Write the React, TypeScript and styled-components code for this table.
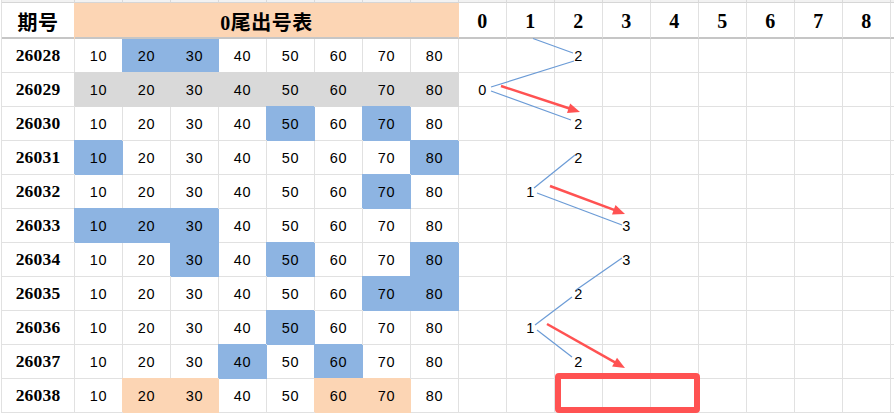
import { Fragment } from 'react';
import styled, { createGlobalStyle, css } from 'styled-components';

const BLUE = '#8db4e2';
const PEACH = '#fcd5b4';
const GREY = '#d9d9d9';
const GRID = '#e1e1e1';
const LINE = '#6b9bd6';
const RED = '#ff5252';

const GlobalStyle = createGlobalStyle`
  body {
    margin: 0;
    background: #fff;
    overflow: hidden;
  }
`;

const Page = styled.div`
  position: relative;
  width: 894px;
  height: 415px;
  overflow: hidden;
`;

const Sheet = styled.div`
  display: grid;
  grid-template-columns: 73px repeat(18, 48px);
  grid-template-rows: 3px 36px repeat(11, 34px);
  margin-left: 1px;
  border-left: 1px solid ${GRID};
`;

const StripCell = styled.div`
  box-sizing: border-box;
  background: #f2f2f2;
  border-right: 1px solid #dadada;
  border-bottom: 1px solid #d6d6d6;
`;

const Cell = styled.div<{ $fill?: string; $top?: boolean }>`
  box-sizing: border-box;
  display: flex;
  align-items: center;
  justify-content: center;
  border-right: 1px solid ${GRID};
  border-bottom: 1px solid ${GRID};
  color: #000;
  font-family: 'Liberation Sans', 'Noto Sans CJK SC', sans-serif;
  font-size: 14.5px;
  letter-spacing: 0.6px;
  ${({ $fill, $top }) =>
    $fill &&
    css`
      background: ${$fill};
      border-color: ${$fill};
      box-shadow: ${$top ? '-1px 0 0' : '-1px -1px 0'} ${$fill};
    `}
`;

const IdCell = styled(Cell)`
  font-family: 'Liberation Serif', serif;
  font-weight: 700;
  font-size: 17.5px;
  letter-spacing: 0.2px;
`;

const HeadCell = styled(Cell)<{ $span?: number }>`
  grid-column: span ${({ $span }) => $span ?? 1};
  border-bottom: 2px solid #c6c6c6;
  padding-top: 3px;
  font-family: 'Liberation Serif', 'Noto Sans CJK SC', serif;
  font-weight: 700;
  font-size: 20px;
  letter-spacing: 0.5px;
  ${({ $fill }) =>
    $fill &&
    css`
      border-bottom: 2px solid #c6c6c6;
    `}
`;

const Overlay = styled.svg`
  position: absolute;
  left: 0;
  top: 0;
  width: 894px;
  height: 415px;
  pointer-events: none;
`;

const Highlight = styled.div`
  position: absolute;
  left: 555px;
  top: 373px;
  width: 145px;
  height: 40px;
  box-sizing: border-box;
  border: 6px solid ${RED};
  border-radius: 4px;
`;

type Row = { id: string; blue?: number[]; peach?: number[]; grey?: boolean; pick: number | null };

const rows: Row[] = [
  { id: '26028', blue: [1, 2], pick: 2 },
  { id: '26029', grey: true, pick: 0 },
  { id: '26030', blue: [4, 6], pick: 2 },
  { id: '26031', blue: [0, 7], pick: 2 },
  { id: '26032', blue: [6], pick: 1 },
  { id: '26033', blue: [0, 1, 2], pick: 3 },
  { id: '26034', blue: [2, 4, 7], pick: 3 },
  { id: '26035', blue: [6, 7], pick: 2 },
  { id: '26036', blue: [4], pick: 1 },
  { id: '26037', blue: [3, 5], pick: 2 },
  { id: '26038', peach: [1, 2, 5, 6], pick: null },
];

const values = [10, 20, 30, 40, 50, 60, 70, 80];
const tails = [0, 1, 2, 3, 4, 5, 6, 7, 8];

const blueLines = [
  [533, 38.5, 573, 53],
  [574, 61, 491, 87],
  [491, 91, 571, 120],
  [575, 155, 534, 188],
  [537, 193, 622, 225],
  [622, 258, 576, 290],
  [572, 297, 535, 325],
  [537, 330, 572, 357],
];

const redArrows = [
  [501, 86, 580, 112],
  [550, 186, 625, 214],
  [547, 324, 625, 368],
];

const arrow = (x1: number, y1: number, x2: number, y2: number) => {
  const len = Math.hypot(x2 - x1, y2 - y1);
  const ux = (x2 - x1) / len;
  const uy = (y2 - y1) / len;
  const bx = x2 - ux * 12;
  const by = y2 - uy * 12;
  const px = -uy * 5;
  const py = ux * 5;
  return {
    line: [x1, y1, bx + ux, by + uy],
    head: `${x2},${y2} ${bx + px},${by + py} ${bx - px},${by - py}`,
  };
};

const fillFor = (row: Row, i: number) => {
  if (row.grey) return GREY;
  if (row.blue?.includes(i)) return BLUE;
  if (row.peach?.includes(i)) return PEACH;
  return undefined;
};

const App = () => (
  <Page>
    <GlobalStyle />
    <Sheet>
      {Array.from({ length: 19 }, (_, i) => (
        <StripCell key={`s${i}`} />
      ))}
      <HeadCell>期号</HeadCell>
      <HeadCell $span={8} $fill={PEACH} $top>
        0尾出号表
      </HeadCell>
      {tails.map((t) => (
        <HeadCell key={`h${t}`}>{t}</HeadCell>
      ))}
      <HeadCell />
      {rows.map((row, r) => (
        <Fragment key={row.id}>
          <IdCell>{row.id}</IdCell>
          {values.map((v, i) => (
            <Cell key={v} $fill={fillFor(row, i)} $top={r === 0}>
              {v}
            </Cell>
          ))}
          {tails.map((t) => (
            <Cell key={`t${t}`}>{row.pick === t ? t : ''}</Cell>
          ))}
          <Cell />
        </Fragment>
      ))}
    </Sheet>
    <Overlay viewBox="0 0 894 415">
      {blueLines.map(([x1, y1, x2, y2], i) => (
        <line key={`b${i}`} x1={x1} y1={y1} x2={x2} y2={y2} stroke={LINE} strokeWidth={1.2} />
      ))}
      {redArrows.map(([x1, y1, x2, y2], i) => {
        const a = arrow(x1, y1, x2, y2);
        return (
          <g key={`r${i}`}>
            <line x1={a.line[0]} y1={a.line[1]} x2={a.line[2]} y2={a.line[3]} stroke={RED} strokeWidth={2.5} />
            <polygon points={a.head} fill={RED} />
          </g>
        );
      })}
    </Overlay>
    <Highlight />
  </Page>
);

export default App;
